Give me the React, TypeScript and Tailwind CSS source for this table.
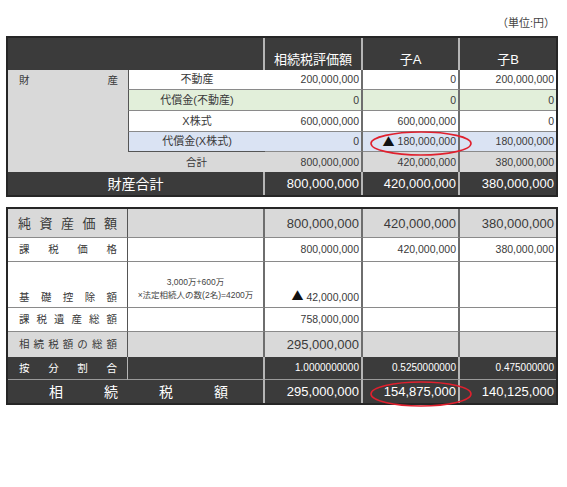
import React from "react";

const FONT = { fontFamily: "'Liberation Sans','Noto Sans CJK JP',sans-serif" };
const CJK = { fontFamily: "'Noto Sans CJK JP',sans-serif" };

const DARK = "bg-[#3b3b3b]";
const GRAY = "bg-[#d9d9d9]";

function Spread({ text, className = "" }: { text: string; className?: string }) {
  return (
    <div className={`flex w-full justify-between ${className}`}>
      {text.split("").map((c, i) => (
        <span key={i}>{c}</span>
      ))}
    </div>
  );
}

function Tri() {
  return (
    <span className="text-[12px] text-[#111] leading-none mr-[3px]" style={CJK}>
      ▲
    </span>
  );
}

const numCell = "flex items-center justify-end pr-[2px] leading-none";
const vLight = "border-r-2 border-r-[#6e6e6e]";
const vDarkRow = "border-r-2 border-r-[#b5b5b5]";

export default function App() {
  return (
    <div className="relative w-[567px] h-[487px] bg-white text-[#3a3a3a]" style={FONT}>
      <div className="pl-[6px]">
        <div className="h-[36px] w-[552px] pt-[16px] text-right text-[11px] leading-[14px] pr-[3px] text-[#444]">
          （単位:円）
        </div>

        {/* Table 1 */}
        <div className="w-[552px] border-2 border-[#262626]">
          <div className="grid grid-cols-[120px_137px_98px_97px_96px] grid-rows-[32px_20px_21px_21px_20px_20px_23px]">
            {/* header */}
            <div className={`col-span-2 ${DARK} ${vDarkRow}`} />
            <div className={`${DARK} ${vDarkRow} flex items-end justify-center pb-[4px] text-white text-[13px] leading-none`}>
              相続税評価額
            </div>
            <div className={`${DARK} ${vDarkRow} flex items-end justify-center pb-[4px] text-white text-[13px] leading-none`}>
              子A
            </div>
            <div className={`${DARK} flex items-end justify-center pb-[4px] text-white text-[13px] leading-none`}>
              子B
            </div>

            {/* left label */}
            <div className={`row-span-5 ${GRAY} pl-[11px] pr-[10px] pt-[5px] text-[10.5px] leading-none`}>
              <Spread text="財産" />
            </div>

            {/* row 1 */}
            <div className="bg-white border-l border-l-[#555] border-b border-b-[#8a8a8a] flex items-center justify-center text-[11px] leading-none">
              不動産
            </div>
            <div className={`bg-white border-b border-b-[#8a8a8a] ${vLight} ${numCell} text-[10.5px]`}>200,000,000</div>
            <div className={`bg-white border-b border-b-[#8a8a8a] ${vLight} ${numCell} text-[10.5px]`}>0</div>
            <div className={`bg-white border-b border-b-[#8a8a8a] ${numCell} text-[10.5px]`}>200,000,000</div>

            {/* row 2 */}
            <div className="bg-[#e2efda] border-l border-l-[#555] border-b border-b-[#8a8a8a] flex items-center justify-center text-[11px] leading-none">
              代償金(不動産)
            </div>
            <div className={`bg-[#e2efda] border-b border-b-[#8a8a8a] ${vLight} ${numCell} text-[10.5px]`}>0</div>
            <div className={`bg-[#e2efda] border-b border-b-[#8a8a8a] ${vLight} ${numCell} text-[10.5px]`}>0</div>
            <div className={`bg-[#e2efda] border-b border-b-[#8a8a8a] ${numCell} text-[10.5px]`}>0</div>

            {/* row 3 */}
            <div className="bg-white border-l border-l-[#555] border-b border-b-[#8a8a8a] flex items-center justify-center text-[11px] leading-none">
              X株式
            </div>
            <div className={`bg-white border-b border-b-[#8a8a8a] ${vLight} ${numCell} text-[10.5px]`}>600,000,000</div>
            <div className={`bg-white border-b border-b-[#8a8a8a] ${vLight} ${numCell} text-[10.5px]`}>600,000,000</div>
            <div className={`bg-white border-b border-b-[#8a8a8a] ${numCell} text-[10.5px]`}>0</div>

            {/* row 4 */}
            <div className="bg-[#dae3f3] border-l border-l-[#555] border-b border-b-[#555] flex items-center justify-center text-[11px] leading-none">
              代償金(X株式)
            </div>
            <div className={`bg-[#dae3f3] border-b border-b-[#8a8a8a] ${vLight} ${numCell} text-[10.5px]`}>0</div>
            <div className={`bg-[#dae3f3] border-b border-b-[#8a8a8a] ${vLight} ${numCell} text-[10.5px]`}>
              <Tri />
              180,000,000
            </div>
            <div className={`bg-[#dae3f3] border-b border-b-[#8a8a8a] ${numCell} text-[10.5px]`}>180,000,000</div>

            {/* row 5 合計 */}
            <div className={`${GRAY} flex items-center justify-center text-[10.5px] leading-none`}>合計</div>
            <div className={`${GRAY} ${vLight} ${numCell} text-[10.5px]`}>800,000,000</div>
            <div className={`${GRAY} ${vLight} ${numCell} text-[10.5px]`}>420,000,000</div>
            <div className={`${GRAY} ${numCell} text-[10.5px]`}>380,000,000</div>

            {/* total row */}
            <div className={`col-span-2 ${DARK} ${vDarkRow} flex items-center justify-center text-white text-[14px] leading-none`}>
              財産合計
            </div>
            <div className={`${DARK} ${vDarkRow} ${numCell} text-white text-[13px]`}>800,000,000</div>
            <div className={`${DARK} ${vDarkRow} ${numCell} text-white text-[13px]`}>420,000,000</div>
            <div className={`${DARK} ${numCell} text-white text-[13px]`}>380,000,000</div>
          </div>
        </div>

        {/* Table 2 */}
        <div className="mt-[10px] w-[552px] border-2 border-[#262626]">
          <div className="grid grid-cols-[120px_137px_98px_97px_96px] grid-rows-[29px_24px_46px_24px_25px_23px_23px]">
            {/* 純資産価額 */}
            <div className={`${GRAY} border-r border-r-[#555] border-b border-b-[#8a8a8a] flex items-center pl-[10px] pr-[10px] text-[13px] leading-none`}>
              <Spread text="純資産価額" />
            </div>
            <div className={`${GRAY} border-b border-b-[#8a8a8a] ${vLight}`} />
            <div className={`${GRAY} border-b border-b-[#8a8a8a] ${vLight} ${numCell} text-[13px]`}>800,000,000</div>
            <div className={`${GRAY} border-b border-b-[#8a8a8a] ${vLight} ${numCell} text-[13px]`}>420,000,000</div>
            <div className={`${GRAY} border-b border-b-[#8a8a8a] ${numCell} text-[13px]`}>380,000,000</div>

            {/* 課税価格 */}
            <div className="bg-white border-r border-r-[#555] border-b border-b-[#8a8a8a] flex items-center pl-[11px] pr-[10px] text-[10.5px] leading-none">
              <Spread text="課税価格" />
            </div>
            <div className={`bg-white border-b border-b-[#8a8a8a] ${vLight}`} />
            <div className={`bg-white border-b border-b-[#8a8a8a] ${vLight} ${numCell} text-[10.5px]`}>800,000,000</div>
            <div className={`bg-white border-b border-b-[#8a8a8a] ${vLight} ${numCell} text-[10.5px]`}>420,000,000</div>
            <div className={`bg-white border-b border-b-[#8a8a8a] ${numCell} text-[10.5px]`}>380,000,000</div>

            {/* 基礎控除額 */}
            <div className="bg-white border-r border-r-[#555] border-b border-b-[#8a8a8a] flex items-end pb-[5px] pl-[11px] pr-[10px] text-[10.5px] leading-none">
              <Spread text="基礎控除額" />
            </div>
            <div className={`bg-white border-b border-b-[#8a8a8a] ${vLight} flex flex-col items-center justify-end pb-[5px] text-[8.5px] leading-[13px] text-[#444]`}>
              <div>3,000万+600万</div>
              <div>×法定相続人の数(2名)=4200万</div>
            </div>
            <div className={`bg-white border-b border-b-[#8a8a8a] ${vLight} flex items-end justify-end pr-[2px] pb-[5px] leading-none text-[10.5px]`}>
              <Tri />
              42,000,000
            </div>
            <div className={`bg-white border-b border-b-[#8a8a8a] ${vLight}`} />
            <div className="bg-white border-b border-b-[#8a8a8a]" />

            {/* 課税遺産総額 */}
            <div className="bg-white border-r border-r-[#555] border-b border-b-[#8a8a8a] flex items-center pl-[11px] pr-[10px] text-[10.5px] leading-none">
              <Spread text="課税遺産総額" />
            </div>
            <div className={`bg-white border-b border-b-[#8a8a8a] ${vLight}`} />
            <div className={`bg-white border-b border-b-[#8a8a8a] ${vLight} ${numCell} text-[10.5px]`}>758,000,000</div>
            <div className={`bg-white border-b border-b-[#8a8a8a] ${vLight}`} />
            <div className="bg-white border-b border-b-[#8a8a8a]" />

            {/* 相続税額の総額 */}
            <div className={`${GRAY} border-r border-r-[#555] flex items-center pl-[11px] pr-[10px] text-[10.5px] leading-none`}>
              <Spread text="相続税額の総額" />
            </div>
            <div className={`${GRAY} ${vLight}`} />
            <div className={`${GRAY} ${vLight} ${numCell} text-[13px]`}>295,000,000</div>
            <div className={`${GRAY} ${vLight}`} />
            <div className={`${GRAY}`} />

            {/* 按分割合 */}
            <div className={`${DARK} border-r border-r-[#b5b5b5] border-b border-b-[#9a9a9a] flex items-center pl-[11px] pr-[10px] text-[10.5px] leading-none text-white`}>
              <Spread text="按分割合" />
            </div>
            <div className={`${DARK} border-b border-b-[#9a9a9a] ${vDarkRow}`} />
            <div className={`${DARK} border-b border-b-[#9a9a9a] ${vDarkRow} ${numCell} text-white text-[10px]`}>1.0000000000</div>
            <div className={`${DARK} border-b border-b-[#9a9a9a] ${vDarkRow} ${numCell} text-white text-[10px]`}>0.5250000000</div>
            <div className={`${DARK} border-b border-b-[#9a9a9a] ${numCell} text-white text-[10px]`}>0.475000000</div>

            {/* 相続税額 */}
            <div className={`col-span-2 ${DARK} ${vDarkRow} flex items-center pl-[41px] pr-[35px] text-white text-[14px] leading-none`}>
              <Spread text="相続税額" />
            </div>
            <div className={`${DARK} ${vDarkRow} ${numCell} text-white text-[13px]`}>295,000,000</div>
            <div className={`${DARK} ${vDarkRow} ${numCell} text-white text-[13px]`}>154,875,000</div>
            <div className={`${DARK} ${numCell} text-white text-[13px]`}>140,125,000</div>
          </div>
        </div>
      </div>

      <svg className="absolute left-0 top-0 pointer-events-none" width="567" height="487">
        <ellipse cx="421" cy="143.5" rx="50" ry="11.5" fill="none" stroke="#e0202e" strokeWidth="1.6" />
        <ellipse cx="421" cy="394" rx="50" ry="12" fill="none" stroke="#e0202e" strokeWidth="1.6" />
      </svg>
    </div>
  );
}
